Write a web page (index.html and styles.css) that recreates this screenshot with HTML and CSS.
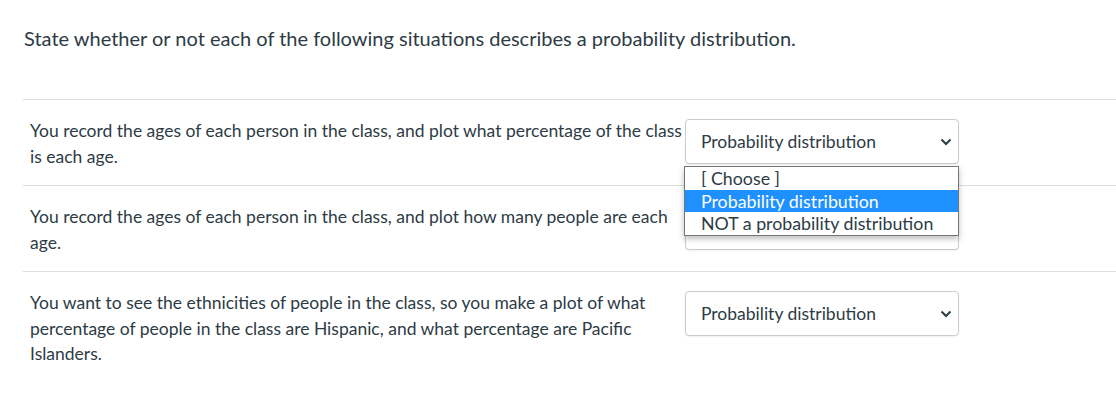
FILE: index.html
```html
<!DOCTYPE html>
<html>
<head>
<meta charset="utf-8">
<link rel="stylesheet" href="styles.css">
</head>
<body>
<div class="page">
  <p class="title">State whether or not each of the following situations describes a probability distribution.</p>
  <div class="rows">
    <div class="row">
      <div class="q">You record the ages of each person in the class, and plot what percentage of the class is each age.</div>
      <div class="sel-wrap">
        <div class="select">
          <span>Probability distribution</span>
          <svg class="chev" width="12" height="8" viewBox="0 0 12 8"><polyline points="1.5,1.5 6,6 10.5,1.5" fill="none" stroke="#2d3b45" stroke-width="2"/></svg>
        </div>
        <ul class="menu">
          <li>[ Choose ]</li>
          <li class="active">Probability distribution</li>
          <li>NOT a probability distribution</li>
        </ul>
      </div>
    </div>
    <div class="row">
      <div class="q">You record the ages of each person in the class, and plot how many people are each age.</div>
      <div class="sel-wrap">
        <div class="select covered">
          <span>Probability distribution</span>
          <svg class="chev" width="12" height="8" viewBox="0 0 12 8"><polyline points="1.5,1.5 6,6 10.5,1.5" fill="none" stroke="#2d3b45" stroke-width="2"/></svg>
        </div>
      </div>
    </div>
    <div class="row last">
      <div class="q">You want to see the ethnicities of people in the class, so you make a plot of what percentage of people in the class are Hispanic, and what percentage are Pacific Islanders.</div>
      <div class="sel-wrap">
        <div class="select">
          <span>Probability distribution</span>
          <svg class="chev" width="12" height="8" viewBox="0 0 12 8"><polyline points="1.5,1.5 6,6 10.5,1.5" fill="none" stroke="#2d3b45" stroke-width="2"/></svg>
        </div>
      </div>
    </div>
  </div>
</div>
</body>
</html>
```

FILE: styles.css
```css
html, body {
  margin: 0;
  padding: 0;
  background: #ffffff;
}

body {
  font-family: Lato, "Liberation Sans", sans-serif;
  color: #2d3b45;
}

.page {
  padding: 24px 0 0 23px;
}

.title {
  margin: 0 0 47px 1px;
  font-size: 20px;
  line-height: 28px;
  color: #2d3b45;
}

.row {
  display: grid;
  grid-template-columns: 655px 274px;
  align-items: start;
  height: 86px;
  box-sizing: border-box;
  padding: 18px 0 0 7px;
  border-top: 1px solid #dddddd;
}

.row.last {
  height: auto;
}

.q {
  font-size: 17.5px;
  line-height: 25.6px;
}

.sel-wrap {
  position: relative;
  margin-top: 1px;
}

.select {
  box-sizing: border-box;
  height: 45px;
  width: 274px;
  border: 1px solid #c7cdd1;
  border-radius: 4px;
  background: #fff;
  display: flex;
  align-items: center;
  justify-content: space-between;
  padding: 0 6px 0 15px;
  font-size: 17.5px;
  box-shadow: 0 1px 2px rgba(0, 0, 0, 0.06);
}

.select.covered > * {
  visibility: hidden;
}

.chev {
  display: block;
  margin-top: 1px;
}

.menu {
  position: absolute;
  top: 47px;
  left: -1px;
  width: 275px;
  box-sizing: border-box;
  margin: 0;
  padding: 0;
  list-style: none;
  background: #fff;
  border: 1px solid #767676;
  box-shadow: 0 3px 6px rgba(0, 0, 0, 0.25);
  z-index: 2;
}

.menu li {
  font-size: 17.8px;
  line-height: 22.5px;
  height: 22.5px;
  padding-left: 16px;
  color: #2d3b45;
  white-space: nowrap;
}

.menu li.active {
  background: #1e90ff;
  color: #ffffff;
}
```
